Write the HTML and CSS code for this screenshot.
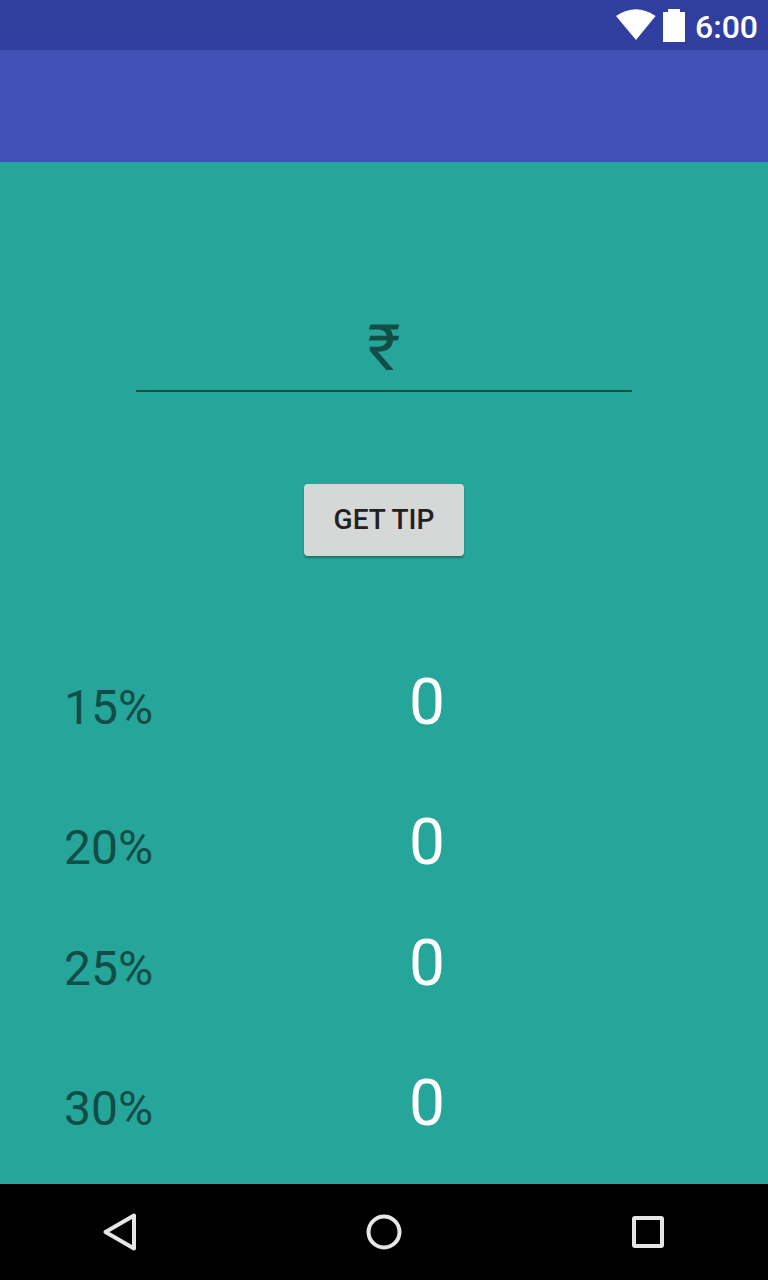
FILE: index.html
```html
<!DOCTYPE html>
<html lang="en">
<head>
<meta charset="utf-8">
<meta name="viewport" content="width=device-width, initial-scale=1">
<title>Tip Calculator</title>
<link rel="stylesheet" href="styles.css">
</head>
<body>
<div class="status-bar">
  <svg class="wifi" width="40" height="32" viewBox="0 0 40 32" aria-hidden="true"><path d="M0 7Q19.800-6.500 39.600 7L20 31Z" fill="#fff"/></svg>
  <svg class="battery" width="22" height="33" viewBox="0 0 22 33" aria-hidden="true"><path d="M5 0h12v3h5v30H0V3h5z" fill="#fff"/></svg>
  <span class="clock">6:00</span>
</div>
<header class="app-bar"></header>
<main class="content">
  <form class="tip-form">
    <input class="amount" type="text" inputmode="decimal" placeholder="₹" aria-label="Bill amount">
    <button class="submit" type="button">GET TIP</button>
    <div class="results">
      <div class="row"><label class="rate" for="tip15">15%</label><output class="tip" id="tip15">0</output></div>
      <div class="row"><label class="rate" for="tip20">20%</label><output class="tip" id="tip20">0</output></div>
      <div class="row row-close"><label class="rate" for="tip25">25%</label><output class="tip" id="tip25">0</output></div>
      <div class="row"><label class="rate" for="tip30">30%</label><output class="tip" id="tip30">0</output></div>
    </div>
  </form>
</main>
<nav class="nav-bar">
  <button class="nav-button" type="button" aria-label="Back"><svg width="60" height="60" viewBox="0 0 60 60"><path d="M15.500 32L44 15.500V48.500Z" fill="none" stroke="#e6e6e6" stroke-width="4" stroke-linejoin="round"/></svg></button>
  <button class="nav-button" type="button" aria-label="Home"><svg width="60" height="60" viewBox="0 0 60 60"><circle cx="30" cy="32" r="15.500" fill="none" stroke="#e6e6e6" stroke-width="4"/></svg></button>
  <button class="nav-button" type="button" aria-label="Recent apps"><svg width="60" height="60" viewBox="0 0 60 60"><rect x="16" y="18" width="28" height="28" rx="1" fill="none" stroke="#e6e6e6" stroke-width="4"/></svg></button>
</nav>
</body>
</html>
```

FILE: styles.css
```css
* {
  box-sizing: border-box;
}

body {
  display: flex;
  flex-direction: column;
  min-height: 100vh;
  margin: 0;
  background: #26a69a;
  font-family: Roboto, "Noto Sans", sans-serif;
}

.status-bar {
  display: flex;
  justify-content: flex-end;
  align-items: flex-start;
  gap: 7px;
  height: 50px;
  padding: 9px 10px 0;
  background: #303f9f;
}

.clock {
  margin-left: 3px;
  color: #fff;
  font-size: 32px;
  font-weight: 500;
  line-height: 36px;
}

.app-bar {
  height: 112px;
  background: #3f51b5;
}

.content {
  flex: 1;
}

.tip-form {
  display: flex;
  flex-direction: column;
  align-items: center;
  padding-top: 148px;
}

.amount {
  width: calc(100% - 272px);
  height: 82px;
  padding: 0 0 4px;
  border: 0;
  border-bottom: 2px solid #124d48;
  border-radius: 0;
  outline: 0;
  background: transparent;
  color: #fff;
  font: 400 64px/76px Roboto, "Noto Sans", sans-serif;
  text-align: center;
}

.amount::placeholder {
  color: #124d48;
  opacity: 1;
}

.submit {
  min-width: 160px;
  height: 72px;
  margin-top: 92px;
  padding: 0 24px;
  border: 0;
  border-radius: 4px;
  background: #d6d7d7;
  box-shadow: 0 2px 2px rgba(0, 0, 0, 0.3);
  color: #212121;
  font: 500 28px/32px Roboto, "Noto Sans", sans-serif;
}

.results {
  display: flex;
  flex-direction: column;
  gap: 64px;
  width: 100%;
  margin-top: 109px;
  padding: 0 0 42px 64px;
}

.row {
  display: grid;
  grid-template-columns: 49fr 51fr;
  align-items: baseline;
}

.row-close {
  margin-top: -19px;
}

.rate {
  color: #124d48;
  font-size: 48px;
  line-height: 56px;
}

.tip {
  color: #fff;
  font-size: 64px;
  line-height: 76px;
}

.nav-bar {
  display: flex;
  justify-content: center;
  gap: 204px;
  height: 96px;
  background: #000;
}

.nav-button {
  display: flex;
  align-items: center;
  justify-content: center;
  width: 60px;
  height: 92px;
  padding: 0;
  border: 0;
  background: transparent;
}
```
